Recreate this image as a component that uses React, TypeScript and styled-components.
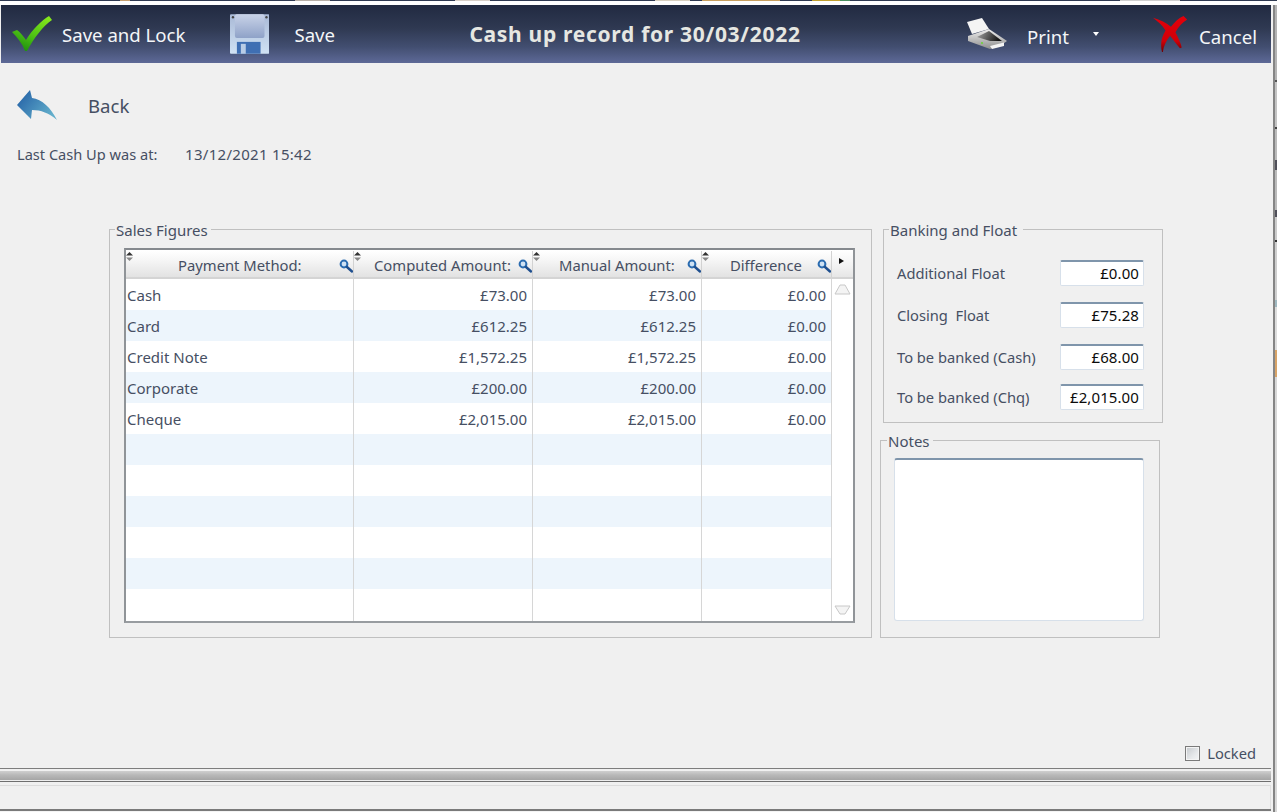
import React from "react";
import styled, { createGlobalStyle } from "styled-components";

const Global = createGlobalStyle`
  html, body { margin: 0; padding: 0; background: #f0f0f0; overflow: hidden; }
  * { box-sizing: border-box; }
  body { font-family: "Noto Sans", "Open Sans", "Liberation Sans", sans-serif; color: #464f63; }
`;

const Page = styled.div`
  width: 1277px; height: 812px; display: flex; flex-direction: column; background: #f0f0f0; overflow: hidden;
`;
const TopStrip = styled.div`
  height: 5px; flex: none; background: #fff; border-top: 1px solid #2f3a52;
`;
const BehindBits = styled.div`
  height: 1px; margin-top: -1px;
  background: linear-gradient(90deg, #2f3a52 0 120px, #c6a070 120px 130px, #2f3a52 130px 295px, #b8b0a8 295px 330px, #2f3a52 330px 455px,
    #d8d0c8 455px 490px, #2f3a52 490px 655px, #d8d0c0 655px 690px, #2f3a52 690px 702px, #c8a060 702px 780px, #2f3a52 780px 812px,
    #c0a030 812px 840px, #4a9060 840px 850px, #2f3a52 850px 1120px, #d0d0d0 1120px 1180px, #2f3a52 1180px);
`;
const Body = styled.div`
  flex: 1; min-height: 0; display: flex;
`;
const Shell = styled.div`
  width: 1273px; flex: none; display: flex; flex-direction: column; min-height: 0; padding-right: 2px;
`;
const WindowEdge = styled.div`
  width: 2px; flex: none; background: #858585;
`;
const BehindEdge = styled.div`
  width: 2px; flex: none;
  background: linear-gradient(180deg, #b4b4b4 0 75px, #555 75px 77px, #c4c4c4 77px 122px, #444 122px 124px, #bbb 124px 155px, #50505a 155px 165px,
    #bbb 165px 205px, #50505a 205px 212px, #ccc 212px 235px, #333 235px 237px, #cfcfcf 237px 295px, #9fb8c0 295px 302px, #ddd 302px 345px,
    #d8a468 345px 372px, #d8d8d8 372px 812px);
`;
const Header = styled.header`
  height: 58px; width: 1270px; flex: none; margin-left: 1px; display: flex; align-items: center;
  background: linear-gradient(180deg, #212a41 0%, #2f3952 40%, #424e70 72%, #5d6997 100%);
  color: #f4f6f8;
`;
const ToolButton = styled.div<{ $w: number; $gap: number; $pl: number }>`
  width: ${(p) => p.$w}px; flex: none; display: flex; align-items: center;
  gap: ${(p) => p.$gap}px; padding-left: ${(p) => p.$pl}px;
  font-size: 18.6px; white-space: nowrap; line-height: 1;
`;
const ToolLabel = styled.span<{ $drop: number }>`
  margin-top: ${(p) => p.$drop}px;
`;
const Title = styled.div`
  flex: none; width: 632px; text-align: center; font-size: 21px; font-weight: 700; letter-spacing: 0.7px;
  color: #e6e7e2; padding-right: 32px; white-space: nowrap;
`;
const Caret = styled.span`
  width: 0; height: 0; border-left: 3.5px solid transparent; border-right: 3.5px solid transparent;
  border-top: 4px solid #fff; margin-left: 4px; margin-top: -1px;
`;
const Content = styled.main`
  flex: 1; min-height: 0; display: flex; flex-direction: column;
`;
const BackRow = styled.div`
  height: 40px; margin-top: 22px; padding-left: 17px; display: flex; align-items: center; gap: 31px;
  font-size: 18.6px;
`;
const InfoRow = styled.div`
  margin-top: 18px; height: 22px; padding-left: 17px; display: flex; align-items: center;
  font-size: 15px; letter-spacing: 0.3px;
`;
const InfoLabel = styled.span`
  width: 168px; flex: none; font-size: 14.6px; letter-spacing: 0;
`;
const Panels = styled.div`
  margin-top: 54px; padding-left: 109px; display: flex; align-items: flex-start; height: 523px;
`;
const Group = styled.fieldset<{ $w: number; $h: number; $ml?: number; $mt?: number }>`
  width: ${(p) => p.$w}px; height: ${(p) => p.$h}px; margin: ${(p) => p.$mt ?? 0}px 0 0 ${(p) => p.$ml ?? 0}px;
  padding: 0; border: 1px solid #c0c0c0; min-width: 0; flex: none;
`;
const Legend = styled.legend<{ $ml?: number; $pr?: number }>`
  margin-left: ${(p) => p.$ml ?? 5}px; padding: 2px ${(p) => p.$pr ?? 3}px 0 1px; font-size: 15px; line-height: 18px;
`;
const Side = styled.div`
  display: flex; flex-direction: column; margin-left: 8px; width: 283px; flex: none;
`;
const Grid = styled.div`
  width: 731px; height: 375px; margin: 9px 0 0 14px;
  border: 2px solid #909498; border-top-color: #85898e; border-bottom-color: #989ca0; background: #fff; display: flex;
`;
const GridBody = styled.div`
  flex: 1; min-width: 0; display: flex; flex-direction: column;
`;
const HeadRow = styled.div`
  height: 29px; flex: none; display: grid; grid-template-columns: 228px 179px 169px 130px;
  border-bottom: 2px solid #d4d4d4; background: #fff; padding-top: 1px;
`;
const HeadCell = styled.div<{ $pl: number }>`
  position: relative; display: flex; align-items: flex-end; padding: 0 0 2px ${(p) => p.$pl}px;
  font-size: 14.8px; white-space: nowrap; line-height: 20px;
  background: linear-gradient(180deg, #ffffff 0%, #f6f6f6 35%, #e2e2e2 100%);
  border-right: 1px solid #d2d2d2;
`;
const SortMark = styled.svg`
  position: absolute; left: 0; top: 1px; width: 7px; height: 9px;
`;
const SearchMark = styled.svg`
  position: absolute; right: 0; top: 8px; width: 14px; height: 14px;
`;
const Rows = styled.div`
  flex: 1; min-height: 0; display: flex; flex-direction: column;
`;
const Row = styled.div<{ $alt: boolean }>`
  height: 31px; flex: none; display: grid; grid-template-columns: 228px 179px 169px 130px;
  background: ${(p) => (p.$alt ? "#edf5fc" : "#ffffff")};
`;
const Cell = styled.div<{ $right?: boolean }>`
  display: flex; align-items: center; justify-content: ${(p) => (p.$right ? "flex-end" : "flex-start")};
  padding: 1px ${(p) => (p.$right ? 5 : 2)}px 0 1px; border-right: 1px solid #d6d6d6;
  font-size: 15px; white-space: nowrap;
`;
const FillCell = styled.div`
  flex: 1; display: grid; grid-template-columns: 228px 179px 169px 130px;
`;
const Divider = styled.div`
  border-right: 1px solid #d6d6d6;
`;
const ScrollRail = styled.div`
  width: 21px; flex: none; display: flex; flex-direction: column; align-items: center; background: #fff;
`;
const ScrollCorner = styled.div`
  width: 100%; height: 29px; flex: none; padding: 8px 0 0 7px; display: flex;
  background: linear-gradient(180deg, #fff 0%, #f2f2f2 60%, #e6e6e6 100%); border-bottom: 2px solid #d4d4d4;
`;
const ScrollTrack = styled.div`
  flex: 1; width: 100%; display: flex; flex-direction: column; justify-content: space-between; align-items: center;
  padding: 5px 0 6px;
`;
const FieldList = styled.div`
  padding: 13px 18px 0 13px; display: flex; flex-direction: column;
`;
const FieldRow = styled.div<{ $h: number }>`
  height: ${(p) => p.$h}px; display: flex; align-items: center; justify-content: space-between;
  font-size: 14.7px; white-space: pre;
`;
const ValueBox = styled.div`
  width: 84px; height: 26px; background: #fff; border: 1px solid #d7e0ea; border-top: 2px solid #7f95ab;
  border-radius: 2px; color: #0b0b0b; text-align: right; padding: 0 4px; line-height: 23px; font-size: 15px; letter-spacing: 0.1px;
`;
const NotesBox = styled.div`
  width: 250px; height: 163px; margin: 8px 0 0 13px; background: #fff;
  border: 1px solid #d7e0ea; border-top: 2px solid #7f95ab; border-radius: 3px;
`;
const Footer = styled.div`
  height: 22px; flex: none; padding-right: 15px; display: flex; justify-content: flex-end; align-items: center; gap: 7px;
  font-size: 14.7px;
`;
const CheckBox = styled.span`
  width: 15px; height: 15px; border: 1px solid #7a7a7a;
  background: linear-gradient(135deg, #c4c8cc 0%, #e6e8ea 60%, #f4f5f6 100%);
  box-shadow: inset 0 0 0 1px #f4f4f4;
`;
const Splitter = styled.div`
  height: 14px; flex: none; margin-top: 4px;
  border-top: 1px solid #7d7d7d; border-bottom: 1px solid #6f6f6f;
  background: linear-gradient(180deg, #f0f0f0 0 2px, #cfcfcf 2px, #b8b8b8 50%, #a6a6a6 90%, #eeeeee 90%);
`;
const StatusBar = styled.div`
  flex: 1; min-height: 0; margin-top: 3px; border-top: 1px solid #dcdcdc; border-right: 1px solid #e0e0e0; background: #f0f0f0;
`;
const BaseLine = styled.div`
  height: 3px; flex: none; background: #f4f4f4; border-top: 2px solid #7a7a7a;
`;

const CheckIcon = () => (
  <svg width="40" height="36" viewBox="0 0 40 36">
    <defs><linearGradient id="chk" x1="0.8" y1="0" x2="0.3" y2="1"><stop offset="0" stopColor="#86e81c" /><stop offset="0.55" stopColor="#4fc414" /><stop offset="1" stopColor="#1f8f10" /></linearGradient></defs>
    <path d="M0 16 L5 14 C8 16 11 20 14 24 C20 14 30 4 37 0 L40 4 C31 10 22 22 15 35 L13 35 C10 27 5 21 0 16 Z" fill="url(#chk)" />
  </svg>
);
const FloppyIcon = () => (
  <svg width="40" height="40" viewBox="0 0 40 40">
    <defs>
      <linearGradient id="fl" x1="0" y1="0" x2="0" y2="1"><stop offset="0" stopColor="#a9b9d6" /><stop offset="1" stopColor="#d0e2f4" /></linearGradient>
      <linearGradient id="fl2" x1="0" y1="0" x2="0" y2="1"><stop offset="0" stopColor="#c9d3e8" /><stop offset="1" stopColor="#8fa2c8" /></linearGradient>
    </defs>
    <rect width="40" height="40" rx="1" fill="url(#fl)" />
    <rect x="5" y="0" width="30" height="24" rx="2" fill="url(#fl2)" />
    <rect x="7" y="28" width="24" height="12" fill="#3f6fb3" />
    <rect x="11" y="30" width="5" height="10" fill="#b9cde6" />
    <circle cx="3" cy="3" r="1.2" fill="#444" /><circle cx="37" cy="3" r="1.2" fill="#444" />
  </svg>
);
const PrinterIcon = () => (
  <svg width="40" height="32" viewBox="0 0 40 32">
    <defs>
      <linearGradient id="pb" x1="0" y1="0" x2="0" y2="1"><stop offset="0" stopColor="#f0f0f0" /><stop offset="1" stopColor="#8d8d8d" /></linearGradient>
      <linearGradient id="pt" x1="0" y1="0" x2="1" y2="0.2"><stop offset="0" stopColor="#a8a8a8" /><stop offset="1" stopColor="#141414" /></linearGradient>
    </defs>
    <path d="M0 4 L15 0 L22 11 L5 16 Z" fill="#f4f4f4" />
    <path d="M1 18 L22 11 L40 23 L33 28 L23 31 L1 23 Z" fill="url(#pb)" />
    <path d="M10 19 L22 13 L35 23 L23 23 Z" fill="url(#pt)" />
    <path d="M23 28 L37 24.5 L37 28 L25 31 Z" fill="#f4f4f4" />
    <circle cx="15" cy="25" r="1.1" fill="#6fd23a" />
  </svg>
);
const CrossIcon = () => (
  <svg width="38" height="40" viewBox="0 0 38 40">
    <defs><linearGradient id="cx" x1="0" y1="0" x2="0" y2="1"><stop offset="0" stopColor="#e4000a" /><stop offset="0.7" stopColor="#d00008" /><stop offset="1" stopColor="#6d0004" /></linearGradient></defs>
    <path d="M0 2 C8 4 15 8 20 12 C24 7 29 2 34 0 L38 4 C33 7 28 12 25 18 C28 24 31 30 32 35 L30 36 C26 31 22 26 19 22 C15 27 12 33 11 40 L10 40 C8 32 9 24 14 16 C10 10 5 6 0 2 Z" fill="url(#cx)" />
  </svg>
);
const BackIcon = () => (
  <svg width="40" height="30" viewBox="0 0 40 30">
    <defs><linearGradient id="bk" x1="0" y1="0" x2="1" y2="0.6"><stop offset="0" stopColor="#1f5ba3" /><stop offset="1" stopColor="#62aecb" /></linearGradient></defs>
    <path d="M0 15 L13 0 L15 8 C25 9 34 18 40 30 C32 23 24 20 15 20 L14 29 Z" fill="url(#bk)" />
  </svg>
);
const Sort = () => (
  <SortMark viewBox="0 0 7 9"><path d="M3.5 0 L7 3.5 L0 3.5 Z" fill="#333" /><path d="M0 5.5 L7 5.5 L3.5 9 Z" fill="#888" /></SortMark>
);
const Search = () => (
  <SearchMark viewBox="0 0 14 14">
    <circle cx="5" cy="5" r="3.4" fill="#cfe2f4" stroke="#2b6cb0" strokeWidth="2" />
    <path d="M8 8 L13 12.5" stroke="#1f4f8f" strokeWidth="2.4" strokeLinecap="round" />
  </SearchMark>
);

const columns = [
  { label: "Payment Method:", pl: 52 },
  { label: "Computed Amount:", pl: 20 },
  { label: "Manual Amount:", pl: 26 },
  { label: "Difference", pl: 28 },
];
const payments = [
  ["Cash", "£73.00", "£73.00", "£0.00"],
  ["Card", "£612.25", "£612.25", "£0.00"],
  ["Credit Note", "£1,572.25", "£1,572.25", "£0.00"],
  ["Corporate", "£200.00", "£200.00", "£0.00"],
  ["Cheque", "£2,015.00", "£2,015.00", "£0.00"],
];
const emptyRows = 6;
const fields = [
  { label: "Additional Float", value: "£0.00", h: 42 },
  { label: "Closing  Float", value: "£75.28", h: 42 },
  { label: "To be banked (Cash)", value: "£68.00", h: 42 },
  { label: "To be banked (Chq)", value: "£2,015.00", h: 38 },
];

export default function App() {
  return (
    <Page>
      <Global />
      <TopStrip><BehindBits /></TopStrip>
      <Body>
        <Shell>
          <Header>
            <ToolButton $w={229} $gap={10} $pl={11}><CheckIcon /><ToolLabel $drop={2}>Save and Lock</ToolLabel></ToolButton>
            <ToolButton $w={105} $gap={25} $pl={0}><FloppyIcon /><ToolLabel $drop={2}>Save</ToolLabel></ToolButton>
            <Title>Cash up record for 30/03/2022</Title>
            <ToolButton $w={186} $gap={20} $pl={0}><PrinterIcon /><ToolLabel $drop={6}>Print</ToolLabel><Caret /></ToolButton>
            <ToolButton $w={104} $gap={12} $pl={0}><CrossIcon /><ToolLabel $drop={6}>Cancel</ToolLabel></ToolButton>
          </Header>
          <Content>
            <BackRow><BackIcon />Back</BackRow>
            <InfoRow><InfoLabel>Last Cash Up was at:</InfoLabel>13/12/2021 15:42</InfoRow>
            <Panels>
              <Group $w={763} $h={419}>
                <Legend>Sales Figures</Legend>
                <Grid>
                  <GridBody>
                    <HeadRow>
                      {columns.map((c) => (
                        <HeadCell key={c.label} $pl={c.pl}><Sort />{c.label}<Search /></HeadCell>
                      ))}
                    </HeadRow>
                    <Rows>
                      {payments.map((r, i) => (
                        <Row key={r[0]} $alt={i % 2 === 1}>
                          <Cell>{r[0]}</Cell><Cell $right>{r[1]}</Cell><Cell $right>{r[2]}</Cell><Cell $right>{r[3]}</Cell>
                        </Row>
                      ))}
                      {Array.from({ length: emptyRows }, (_, i) => (
                        <Row key={i} $alt={i % 2 === 0}><Cell /><Cell /><Cell /><Cell /></Row>
                      ))}
                      <FillCell><Divider /><Divider /><Divider /><Divider /></FillCell>
                    </Rows>
                  </GridBody>
                  <ScrollRail>
                    <ScrollCorner>
                      <svg width="5" height="6" viewBox="0 0 5 6"><path d="M0 0 L5 3 L0 6 Z" fill="#111" /></svg>
                    </ScrollCorner>
                    <ScrollTrack>
                      <svg width="17" height="11" viewBox="0 0 17 11"><path d="M6 1 L11 1 L16 10 L1 10 Z" fill="#f4f4f4" stroke="#c8c8c8" /></svg>
                      <svg width="17" height="10" viewBox="0 0 17 10"><path d="M1 1 L16 1 L11 9 L6 9 Z" fill="#f4f4f4" stroke="#c8c8c8" /></svg>
                    </ScrollTrack>
                  </ScrollRail>
                </Grid>
              </Group>
              <Side>
                <Group $w={280} $h={204} $ml={3}>
                  <Legend $pr={6}>Banking and Float</Legend>
                  <FieldList>
                    {fields.map((f) => (
                      <FieldRow key={f.label} $h={f.h}>{f.label}<ValueBox>{f.value}</ValueBox></FieldRow>
                    ))}
                  </FieldList>
                </Group>
                <Group $w={280} $h={208} $mt={7}>
                  <Legend $ml={6}>Notes</Legend>
                  <NotesBox />
                </Group>
              </Side>
            </Panels>
            <Footer><CheckBox />Locked</Footer>
            <Splitter />
            <StatusBar />
            <BaseLine />
          </Content>
        </Shell>
        <WindowEdge />
        <BehindEdge />
      </Body>
    </Page>
  );
}
